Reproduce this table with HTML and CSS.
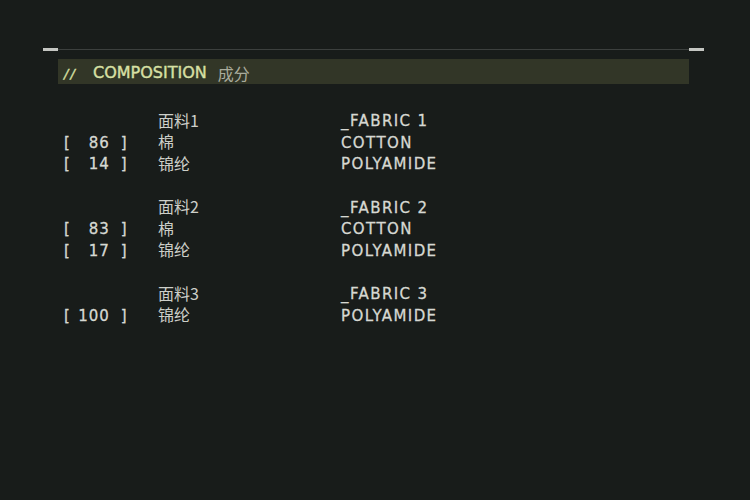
FILE: index.html
```html
<!DOCTYPE html>
<html>
<head>
<meta charset="utf-8">
<link rel="stylesheet" href="styles.css">
</head>
<body>
<div class="panel">
  <div class="rule">
    <span class="cap"></span>
    <span class="line"></span>
    <span class="cap"></span>
  </div>
  <div class="header">
    <span class="slashes">//</span>
    <span class="title">COMPOSITION</span>
    <span class="title-cn">成分</span>
  </div>
  <div class="list">
    <div class="group">
      <div class="row">
        <span class="pct"></span>
        <span class="cn">面料1</span>
        <span class="en">_FABRIC 1</span>
      </div>
      <div class="row">
        <span class="pct"><span>[</span><span class="num">86</span><span>]</span></span>
        <span class="cn">棉</span>
        <span class="en">COTTON</span>
      </div>
      <div class="row">
        <span class="pct"><span>[</span><span class="num">14</span><span>]</span></span>
        <span class="cn">锦纶</span>
        <span class="en">POLYAMIDE</span>
      </div>
    </div>
    <div class="group">
      <div class="row">
        <span class="pct"></span>
        <span class="cn">面料2</span>
        <span class="en">_FABRIC 2</span>
      </div>
      <div class="row">
        <span class="pct"><span>[</span><span class="num">83</span><span>]</span></span>
        <span class="cn">棉</span>
        <span class="en">COTTON</span>
      </div>
      <div class="row">
        <span class="pct"><span>[</span><span class="num">17</span><span>]</span></span>
        <span class="cn">锦纶</span>
        <span class="en">POLYAMIDE</span>
      </div>
    </div>
    <div class="group">
      <div class="row">
        <span class="pct"></span>
        <span class="cn">面料3</span>
        <span class="en">_FABRIC 3</span>
      </div>
      <div class="row">
        <span class="pct"><span>[</span><span class="num">100</span><span>]</span></span>
        <span class="cn">锦纶</span>
        <span class="en">POLYAMIDE</span>
      </div>
    </div>
  </div>
</div>
</body>
</html>
```
FILE: styles.css
```css
html, body {
  margin: 0;
  padding: 0;
  background: #181c1a;
}
body {
  width: 750px;
  height: 500px;
  font-family: "DejaVu Sans", "Noto Sans CJK SC", sans-serif;
  color: #d6d8d2;
}
.panel {
  padding: 48px 46px 0 43px;
}
.rule {
  display: flex;
  align-items: center;
  height: 3px;
}
.cap {
  width: 15px;
  height: 3px;
  background: #c4c6c2;
}
.line {
  flex: 1;
  height: 1px;
  background: #3c403e;
}
.header {
  margin: 8px 15px 0 15px;
  height: 25px;
  background: #323627;
  display: flex;
  align-items: center;
  padding-left: 6px;
  padding-top: 3px;
  box-sizing: border-box;
  font-size: 16px;
  line-height: 1;
}
.slashes {
  color: #d8e0a4;
  font-style: italic;
  width: 29px;
  font-size: 13px;
  letter-spacing: 2px;
  -webkit-text-stroke: 0.4px #d8e0a4;
}
.title {
  color: #d8e0a4;
  -webkit-text-stroke: 0.4px #d8e0a4;
}
.title-cn {
  color: #a9ab9c;
  margin-left: 11px;
  font-family: "Noto Sans CJK SC", sans-serif;
  font-size: 16px;
}
.list {
  margin-top: 27px;
  padding-left: 21px;
}
.group {
  margin-bottom: 22px;
}
.row {
  display: flex;
  align-items: center;
  height: 21.5px;
  line-height: 1;
}
.pct {
  width: 94px;
  display: flex;
  font-size: 15px;
  letter-spacing: 1px;
  -webkit-text-stroke: 0.3px #d6d8d2;
}
.num {
  width: 42px;
  text-align: right;
  padding-right: 7px;
  box-sizing: border-box;
  margin-left: 4px;
  margin-right: 4px;
}
.cn {
  width: 183px;
  font-family: "Noto Sans CJK SC", sans-serif;
  font-size: 16px;
  color: #cdcfc9;
  position: relative;
  top: -2px;
}
.en {
  font-size: 15px;
  letter-spacing: 1.4px;
  -webkit-text-stroke: 0.3px #d6d8d2;
}
```
